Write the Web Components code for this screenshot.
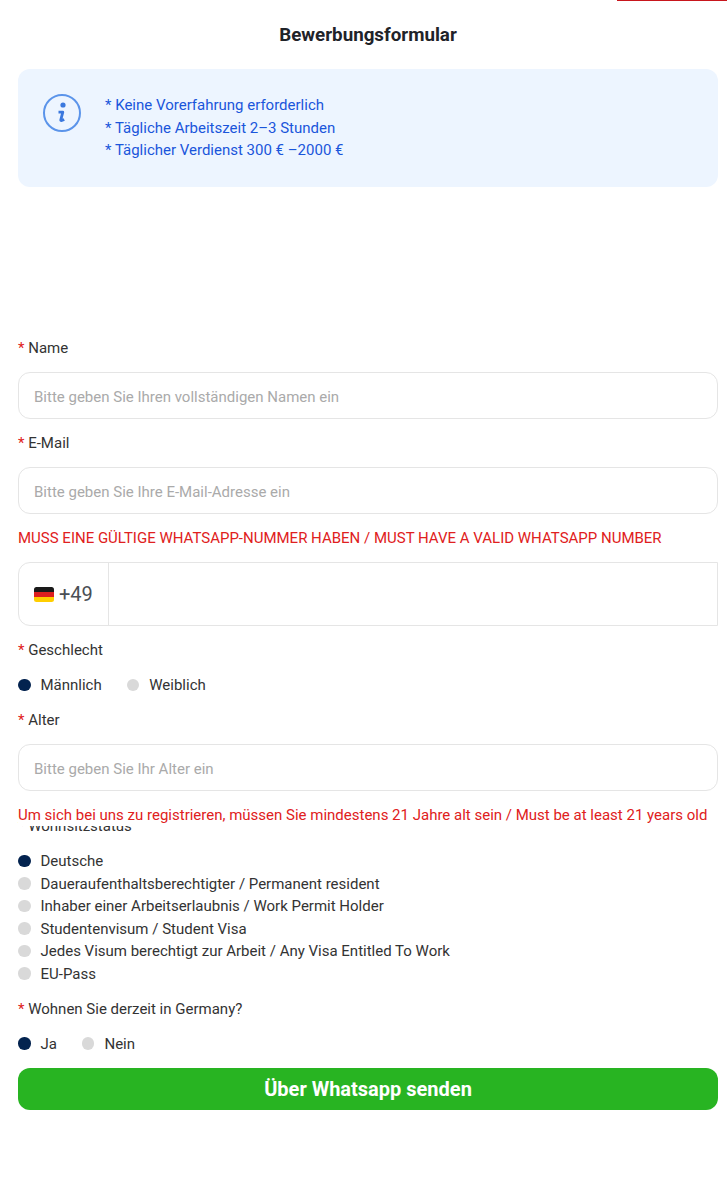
<!DOCTYPE html>
<html lang="de">
<head>
<meta charset="utf-8">
<title>Bewerbungsformular</title>
<style>
  html, body { margin: 0; padding: 0; background: #fff; }
  body { font-family: Roboto, "Liberation Sans", sans-serif; color: #333; height: 1189px; overflow: hidden; }
</style>
</head>
<body>
<apply-page>
  <info-box>
    <div>* Keine Vorerfahrung erforderlich</div>
    <div>* Tägliche Arbeitszeit 2–3 Stunden</div>
    <div>* Täglicher Verdienst 300 € –2000 €</div>
  </info-box>
  <form-label style="margin-top:151px">Name</form-label>
  <text-field placeholder="Bitte geben Sie Ihren vollständigen Namen ein" style="margin-top:14px"></text-field>
  <form-label style="margin-top:14px">E-Mail</form-label>
  <text-field placeholder="Bitte geben Sie Ihre E-Mail-Adresse ein" style="margin-top:14px"></text-field>
  <form-note style="margin-top:14px">MUSS EINE GÜLTIGE WHATSAPP-NUMMER HABEN / MUST HAVE A VALID WHATSAPP NUMBER</form-note>
  <phone-field style="margin-top:14px"></phone-field>
  <form-label style="margin-top:14px">Geschlecht</form-label>
  <radio-row style="margin-top:15px">
    <radio-item checked>Männlich</radio-item>
    <radio-item>Weiblich</radio-item>
  </radio-row>
  <form-label style="margin-top:15px">Alter</form-label>
  <text-field placeholder="Bitte geben Sie Ihr Alter ein" style="margin-top:14px"></text-field>
  <form-note cover style="margin-top:14px">Um sich bei uns zu registrieren, müssen Sie mindestens 21 Jahre alt sein / Must be at least 21 years old</form-note>
  <form-label style="margin-top:-10px">Wohnsitzstatus</form-label>
  <radio-list style="margin-top:15px">
    <radio-item checked>Deutsche</radio-item>
    <radio-item>Daueraufenthaltsberechtigter / Permanent resident</radio-item>
    <radio-item>Inhaber einer Arbeitserlaubnis / Work Permit Holder</radio-item>
    <radio-item>Studentenvisum / Student Visa</radio-item>
    <radio-item>Jedes Visum berechtigt zur Arbeit / Any Visa Entitled To Work</radio-item>
    <radio-item>EU-Pass</radio-item>
  </radio-list>
  <form-label style="margin-top:15px">Wohnen Sie derzeit in Germany?</form-label>
  <radio-row style="margin-top:15px">
    <radio-item checked>Ja</radio-item>
    <radio-item>Nein</radio-item>
  </radio-row>
  <send-button style="margin-top:14px">Über Whatsapp senden</send-button>
</apply-page>

<script>
// small helper, every element gets an open shadow root with its own style
function shadow(el, html) {
  el.attachShadow({ mode: 'open' });
  el.shadowRoot.innerHTML = html;
}

class ApplyPage extends HTMLElement {
  connectedCallback() {
    shadow(this, `
      <style>
        :host { display: block; position: relative; padding: 0 9px 0 18px; font-size: 15px; }
        .progress { position: absolute; top: 0; left: 617px; width: 110px; height: 1px; background: #c8161d; }
        h1 { margin: 0; height: 69px; box-sizing: border-box; padding-top: 24px; text-align: center;
             font-size: 18.75px; line-height: 22px; font-weight: 700; color: #1f2329; }
      </style>
      <div class="progress"></div>
      <h1>Bewerbungsformular</h1>
      <slot></slot>
    `);
  }
}

class InfoBox extends HTMLElement {
  connectedCallback() {
    shadow(this, `
      <style>
        :host { display: flex; box-sizing: border-box; height: 118px; background: #edf5ff; border-radius: 12px;
                padding: 24px 0 0 24px; color: #1a56db; font-size: 15px; line-height: 22.5px; }
        svg { flex: none; width: 40px; height: 40px; margin: 0 23px 0 0; }
        .text { padding-top: 1px; }
      </style>
      <svg viewBox="0 0 40 40" fill="none">
        <circle cx="20" cy="20" r="18" stroke="#5b94ea" stroke-width="2"/>
        <circle cx="21" cy="12" r="2.6" fill="#3a78de"/>
        <path d="M16.500 19.200h4.300l-2 7.600q-.4 1.700 3.400-.2" stroke="#3a78de" stroke-width="2.800" stroke-linejoin="round"/>
      </svg>
      <div class="text"><slot></slot></div>
    `);
  }
}

class FormLabel extends HTMLElement {
  connectedCallback() {
    shadow(this, `
      <style>
        :host { display: block; font-size: 15px; line-height: 20px; color: #333; }
        span { color: #e02020; }
      </style>
      <span>*</span> <slot></slot>
    `);
  }
}

class TextField extends HTMLElement {
  connectedCallback() {
    shadow(this, `
      <style>
        :host { display: block; }
        input { display: block; width: 100%; height: 47px; box-sizing: border-box; padding: 3px 15px 0;
                border: 1px solid #e5e5e5; border-radius: 12px; outline: none; background: #fff;
                font: 15px Roboto, "Liberation Sans", sans-serif; color: #333; }
        input::placeholder { color: #aaa; opacity: 1; }
      </style>
      <input type="text" placeholder="${this.getAttribute('placeholder') || ''}">
    `);
  }
}

class FormNote extends HTMLElement {
  connectedCallback() {
    shadow(this, `
      <style>
        :host { display: block; font-size: 15px; line-height: 20px; color: #e02020; white-space: nowrap; }
        :host([cover]) { position: relative; z-index: 1; background: #fff; padding-bottom: 1px; }
      </style>
      <slot></slot>
    `);
  }
}

class PhoneField extends HTMLElement {
  connectedCallback() {
    shadow(this, `
      <style>
        :host { display: flex; box-sizing: border-box; height: 64px; border: 1px solid #e5e5e5;
                border-radius: 12px 0 0 12px; }
        .code { display: flex; align-items: center; gap: 5px; box-sizing: border-box; width: 90px; padding-left: 15px;
                border-right: 1px solid #e5e5e5; font-size: 20px; color: #4a4f55; }
        svg { width: 20px; height: 15px; }
        input { flex: 1; min-width: 0; border: 0; outline: none; background: transparent; }
      </style>
      <div class="code">
        <svg viewBox="0 0 20 15">
          <clipPath id="flag"><rect width="20" height="15" rx="2.500"/></clipPath>
          <g clip-path="url(#flag)">
            <rect width="20" height="5" fill="#1a1a1a"/>
            <rect y="5" width="20" height="5" fill="#dd1f1f"/>
            <rect y="10" width="20" height="5" fill="#ffce00"/>
          </g>
        </svg>
        <span>+49</span>
      </div>
      <input type="tel">
    `);
  }
}

class RadioRow extends HTMLElement {
  connectedCallback() {
    shadow(this, `
      <style>:host { display: flex; gap: 25px; }</style>
      <slot></slot>
    `);
  }
}

class RadioList extends HTMLElement {
  connectedCallback() {
    shadow(this, `
      <style>:host { display: flex; flex-direction: column; gap: 2.500px; }</style>
      <slot></slot>
    `);
  }
}

class RadioItem extends HTMLElement {
  connectedCallback() {
    shadow(this, `
      <style>
        :host { display: flex; align-items: center; gap: 10px; font-size: 15px; line-height: 20px; color: #333; }
        i { flex: none; width: 12.5px; height: 12.5px; border-radius: 50%; background: #d9d9d9; }
        :host([checked]) i { background: #03234f; }
      </style>
      <i></i><slot></slot>
    `);
  }
}

class SendButton extends HTMLElement {
  connectedCallback() {
    shadow(this, `
      <style>
        :host { display: block; }
        button { display: block; width: 100%; height: 42px; border: 0; border-radius: 12px; background: #28b422;
                 color: #fff; font: 700 20px Roboto, "Liberation Sans", sans-serif; padding: 0; }
      </style>
      <button type="button"><slot></slot></button>
    `);
  }
}

customElements.define('apply-page', ApplyPage);
customElements.define('info-box', InfoBox);
customElements.define('form-label', FormLabel);
customElements.define('text-field', TextField);
customElements.define('form-note', FormNote);
customElements.define('phone-field', PhoneField);
customElements.define('radio-row', RadioRow);
customElements.define('radio-list', RadioList);
customElements.define('radio-item', RadioItem);
customElements.define('send-button', SendButton);
</script>
</body>
</html>
